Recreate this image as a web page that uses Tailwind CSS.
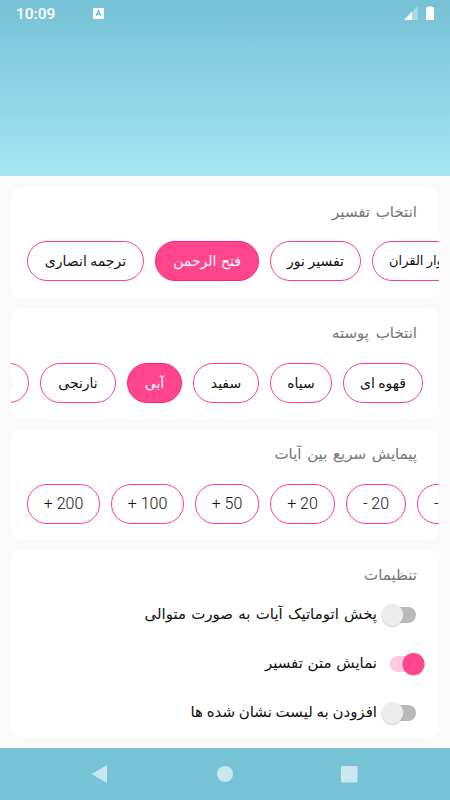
<!DOCTYPE html>
<html lang="fa">
<head>
    <meta charset="UTF-8">
    <meta name="viewport" content="width=device-width, initial-scale=1.0">
    <title>تنظیمات</title>
    <script src="https://cdn.jsdelivr.net/npm/@tailwindcss/browser@4"></script>
</head>
<body class="flex h-[800px] w-[450px] flex-col overflow-hidden bg-[#fafafa] font-[Roboto,'DejaVu_Sans',sans-serif] text-[#111]">
    <!-- Status bar and header -->
    <header class="h-44 shrink-0 bg-linear-to-b from-[#76c1d6] to-[#a6e6f1]">
        <div class="flex h-7 items-center pl-4 pr-4 text-white">
            <span class="w-[77px] pt-0.5 text-[15.5px] font-medium">10:09</span>
            <svg class="-mt-0.5 size-[11px]" viewBox="0 0 11 11">
                <rect width="11" height="11" rx="1" fill="#fff"/>
                <path d="M3 8 5.5 2.5 8 8M4 6.2h3" fill="none" stroke="#76c1d6" stroke-width="1.4"/>
            </svg>
            <svg class="-mt-0.5 ml-auto h-[14px] w-[14px]" viewBox="0 0 14 14">
                <path d="M14 0v14H0z" fill="#fff" fill-opacity=".35"/>
                <path d="M8 6v8H0z" fill="#fff"/>
            </svg>
            <svg class="-mt-0.5 ml-2 h-[14px] w-2" viewBox="0 0 8 14">
                <path d="M2.5 0h3v1.3H8V14H0V1.3h2.5z" fill="#fff"/>
            </svg>
        </div>
    </header>

    <main class="flex flex-1 flex-col gap-[10px] px-[11px] pt-[11px]">
        <section class="h-[111px] shrink-0 overflow-hidden rounded-[11px] bg-white">
            <h2 dir="rtl" class="h-[54px] pr-[22px] pt-[14px] text-[15px] leading-[22px] text-[#757575] [word-spacing:2px]">انتخاب تفسیر</h2>
            <div class="flex gap-[11px] pl-4 text-[14px]">
                <button class="h-10 w-[117px] shrink-0 rounded-full border border-[#ff4081]" dir="rtl">ترجمه انصاری</button>
                <button class="h-10 w-[104px] shrink-0 rounded-full border border-[#ff2080] bg-[#ff458c] text-white [word-spacing:1px]" dir="rtl">فتح الرحمن</button>
                <button class="h-10 w-[91px] shrink-0 rounded-full border border-[#ff4081]" dir="rtl">تفسیر نور</button>
                <button class="h-10 w-[104px] shrink-0 rounded-full border border-[#ff4081] pl-4 text-left text-[13px]" dir="rtl">انوار القران</button>
            </div>
        </section>

        <section class="h-[111px] shrink-0 overflow-hidden rounded-[11px] bg-white">
            <h2 dir="rtl" class="h-[55px] pr-[22px] pt-[14px] text-[15px] leading-[22px] text-[#757575] [word-spacing:3px]">انتخاب پوسته</h2>
            <div dir="rtl" class="flex gap-[11px] pr-4 text-[14px]">
                <button class="h-10 w-[80px] shrink-0 rounded-full border border-[#ff4081]">قهوه ای</button>
                <button class="h-10 w-[62px] shrink-0 rounded-full border border-[#ff4081]">سیاه</button>
                <button class="h-10 w-[66px] shrink-0 rounded-full border border-[#ff4081]">سفید</button>
                <button class="h-10 w-[55px] shrink-0 rounded-full border border-[#ff2080] bg-[#ff458c] text-white">آبی</button>
                <button class="h-10 w-[76px] shrink-0 rounded-full border border-[#ff4081]">نارنجی</button>
                <button class="h-10 w-[60px] shrink-0 rounded-full border border-[#ff4081] pr-4 text-right">سبز</button>
            </div>
        </section>

        <section class="h-[111px] shrink-0 overflow-hidden rounded-[11px] bg-white">
            <h2 dir="rtl" class="h-[55px] pr-[22px] pt-[14px] text-[15px] leading-[22px] text-[#757575] [word-spacing:2px]">پیمایش سریع بین آیات</h2>
            <div class="flex gap-[11px] pl-4 text-[16px] font-light">
                <button class="h-10 w-[73px] shrink-0 rounded-full border border-[#ff4081]">+ 200</button>
                <button class="h-10 w-[73px] shrink-0 rounded-full border border-[#ff4081]">+ 100</button>
                <button class="h-10 w-[64px] shrink-0 rounded-full border border-[#ff4081]">+ 50</button>
                <button class="h-10 w-[65px] shrink-0 rounded-full border border-[#ff4081]">+ 20</button>
                <button class="h-10 w-[60px] shrink-0 rounded-full border border-[#ff4081]">- 20</button>
                <button class="h-10 w-[60px] shrink-0 rounded-full border border-[#ff4081]">- 50</button>
            </div>
        </section>

        <section class="h-[187px] shrink-0 rounded-[11px] bg-white">
            <h2 dir="rtl" class="h-10 pr-[22px] pt-[14px] text-[15px] leading-[22px] text-[#757575]">تنظیمات</h2>
            <div dir="rtl" class="flex flex-col pr-[14px] text-[15px]">
                <label class="flex h-[49px] items-center gap-[6px]">
                    <svg class="h-7 w-[42px] overflow-visible" viewBox="0 0 42 28">
                        <rect x="8" y="6" width="25" height="16" rx="8" fill="#b9b9b9"/>
                        <circle cx="9.3" cy="15" r="11" fill="#000" fill-opacity=".18"/>
                        <circle cx="9.3" cy="14" r="11" fill="#ececec"/>
                    </svg>
                    <span class="[word-spacing:1.5px]">پخش اتوماتیک آیات به صورت متوالی</span>
                </label>
                <label class="flex h-[49px] items-center gap-[6px]">
                    <svg class="h-7 w-[42px] overflow-visible" viewBox="0 0 42 28">
                        <rect x="7" y="6" width="25" height="16" rx="8" fill="#ffc8dc"/>
                        <circle cx="30.5" cy="15" r="11" fill="#000" fill-opacity=".2"/>
                        <circle cx="30.5" cy="14" r="11" fill="#ff458c"/>
                    </svg>
                    <span class="[word-spacing:1px]">نمایش متن تفسیر</span>
                </label>
                <label class="flex h-[49px] items-center gap-[6px]">
                    <svg class="h-7 w-[42px] overflow-visible" viewBox="0 0 42 28">
                        <rect x="8" y="6" width="25" height="16" rx="8" fill="#b9b9b9"/>
                        <circle cx="9.3" cy="15" r="11" fill="#000" fill-opacity=".18"/>
                        <circle cx="9.3" cy="14" r="11" fill="#ececec"/>
                    </svg>
                    <span>افزودن به لیست نشان شده ها</span>
                </label>
            </div>
        </section>
    </main>

    <!-- Navigation bar -->
    <nav class="h-[52.5px] shrink-0 bg-[#77c3d6]">
        <svg class="h-[52px] w-[450px]" viewBox="0 0 450 52">
            <g fill="#c9e7ef">
                <path d="M91.5 26 107 17v18z"/>
                <circle cx="225" cy="26" r="8"/>
                <rect x="341" y="18" width="16.5" height="16.5" rx="1"/>
            </g>
        </svg>
    </nav>
</body>
</html>
